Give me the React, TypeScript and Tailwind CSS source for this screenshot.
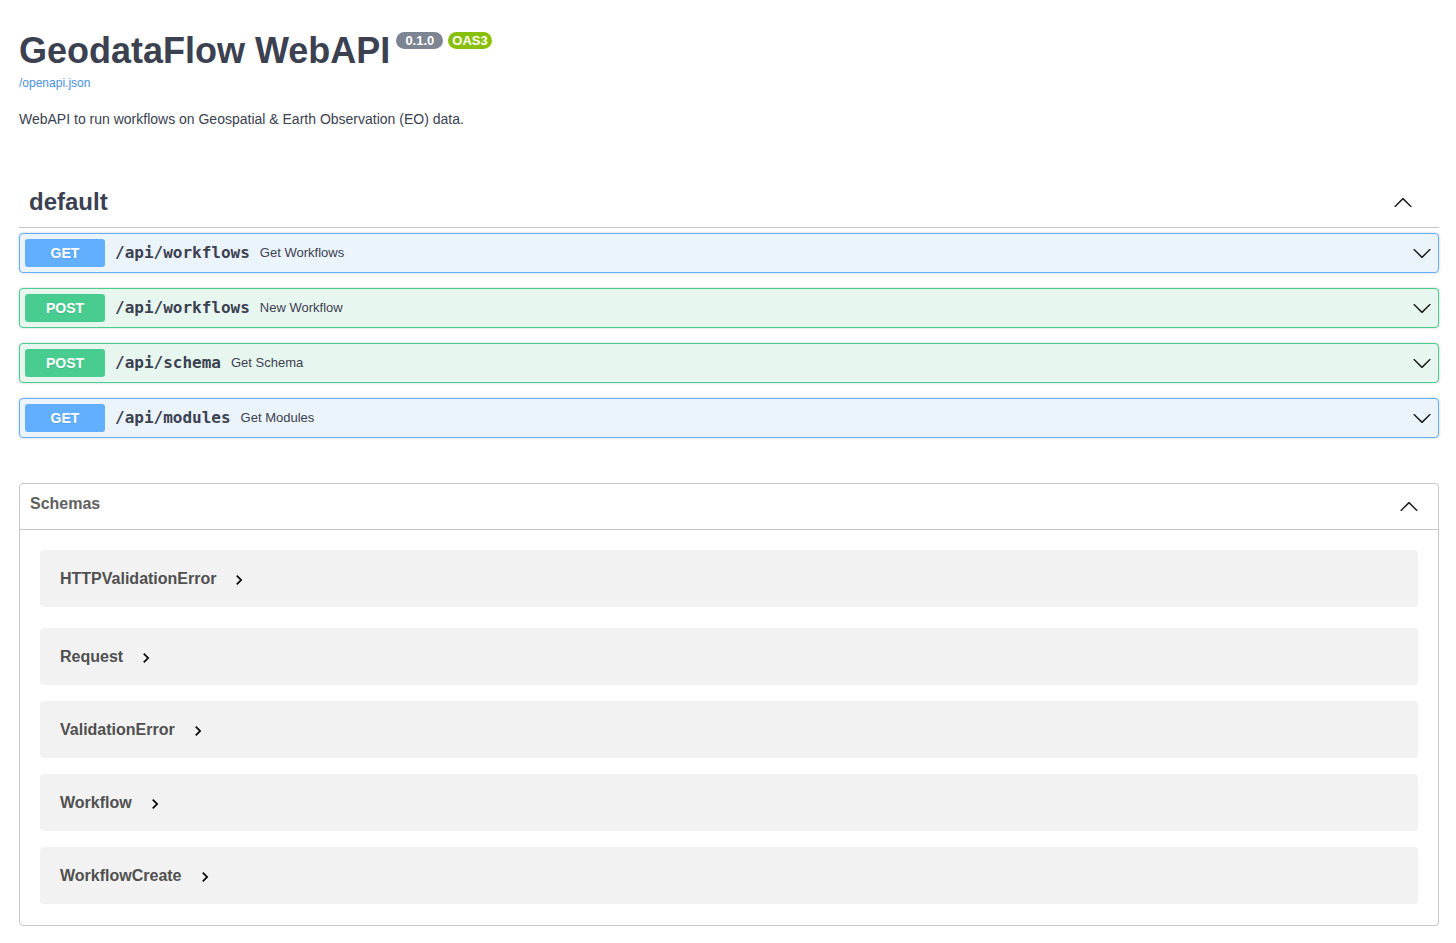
import React from 'react';

const sans = "font-['Liberation_Sans',Arial,sans-serif]";
const mono = "font-['DejaVu_Sans_Mono',monospace]";

const operations = [
  { method: 'GET', path: '/api/workflows', summary: 'Get Workflows' },
  { method: 'POST', path: '/api/workflows', summary: 'New Workflow' },
  { method: 'POST', path: '/api/schema', summary: 'Get Schema' },
  { method: 'GET', path: '/api/modules', summary: 'Get Modules' },
];

const schemas = ['HTTPValidationError', 'Request', 'ValidationError', 'Workflow', 'WorkflowCreate'];

function ArrowUp({ className }: { className?: string }) {
  return (
    <svg viewBox="0 0 20 20" width="20" height="20" className={className} fill="#1b1b1b">
      <path d="M17.418 14.908c.272.268.709.268.979 0 .27-.268.271-.701 0-.969l-7.908-7.83c-.27-.268-.707-.268-.979 0l-7.908 7.83c-.27.268-.27.701 0 .969.271.268.709.268.979 0L10 7.771l7.418 7.137z" />
    </svg>
  );
}

function ArrowDown({ className }: { className?: string }) {
  return (
    <svg viewBox="0 0 20 20" width="20" height="20" className={className} fill="#1b1b1b">
      <path d="M17.418 6.109c.272-.268.709-.268.979 0s.271.701 0 .969l-7.908 7.83c-.27.268-.707.268-.979 0l-7.908-7.83c-.27-.268-.27-.701 0-.969.271-.268.709-.268.979 0L10 13.25l7.418-7.141z" />
    </svg>
  );
}

function Chevron() {
  return (
    <svg viewBox="0 0 24 24" width="20" height="20" className="ml-[13px] mt-[3px]" fill="#000">
      <path d="M10 6L8.59 7.41 13.17 12l-4.58 4.59L10 18l6-6z" />
    </svg>
  );
}

function Operation({ method, path, summary }: { method: string; path: string; summary: string }) {
  const isGet = method === 'GET';
  return (
    <div
      className={
        isGet
          ? 'mb-[15px] flex h-[40px] items-center rounded-[4px] border border-[#61affe] bg-[#ebf3fb] p-[5px] shadow-[0_0_3px_rgba(0,0,0,0.19)]'
          : 'mb-[15px] flex h-[40px] items-center rounded-[4px] border border-[#49cc90] bg-[#e8f6f0] p-[5px] shadow-[0_0_3px_rgba(0,0,0,0.19)]'
      }
    >
      <span
        className={
          (isGet ? 'bg-[#61affe]' : 'bg-[#49cc90]') +
          ' flex h-[28px] w-[80px] items-center justify-center rounded-[3px] text-[14px] font-bold leading-[16px] text-white [text-shadow:0_1px_0_rgba(0,0,0,0.1)]'
        }
      >
        {method}
      </span>
      <span className={`${mono} px-[10px] text-[16px] font-bold leading-[20px] text-[#3b4151]`}>{path}</span>
      <span className="text-[13px] leading-[16px] text-[#3b4151]">{summary}</span>
      <ArrowDown className="ml-auto mr-[1px]" />
    </div>
  );
}

export default function App() {
  return (
    <div className={`${sans} min-h-screen bg-white pl-[19px] text-[#3b4151]`}>
      <div className="w-[1420px]">
        {/* Info */}
        <div className="pt-[30px]">
          <h2 className="flex items-start text-[36px] font-bold leading-[41px] text-[#3b4151]">
            <span>GeodataFlow WebAPI</span>
            <span className="ml-[6px] mt-[2px] rounded-full bg-[#7d8492] px-[9px] text-[13px] font-bold leading-[17px] text-white">
              0.1.0
            </span>
            <span className="ml-[5px] mt-[2px] rounded-full bg-[#89bf04] px-[4px] text-[13px] font-bold leading-[17px] text-white">
              OAS3
            </span>
          </h2>
          <a className="mt-[5px] block text-[12px] leading-[14px] text-[#4990e2]">/openapi.json</a>
          <p className="mt-[19px] text-[14px] leading-[21px] text-[#3b4151]">
            WebAPI to run workflows on Geospatial &amp; Earth Observation (EO) data.
          </p>
        </div>

        {/* default tag */}
        <div className="mt-[47px]">
          <div className="flex items-center border-b border-[#c4c6cb] pb-[10px] pl-[10px] pr-[26px] pt-[10px]">
            <h3 className="text-[24px] font-bold leading-[30px] text-[#3b4151]">default</h3>
            <ArrowUp className="ml-auto" />
          </div>
          <div className="pt-[5px]">
            {operations.map((op, i) => (
              <Operation key={i} {...op} />
            ))}
          </div>
        </div>

        {/* Schemas */}
        <section className="mt-[45px] rounded-[4px] border border-[#c4c6cb]">
          <div className="flex h-[46px] items-center border-b border-[#c4c6cb] pb-[5px] pl-[10px] pr-[19px]">
            <h4 className="text-[16px] font-bold leading-[24px] text-[#606060]">Schemas</h4>
            <ArrowUp className="ml-auto mt-[4px]" />
          </div>
          <div className="px-[20px] pb-[21px] pt-[20px]">
            {schemas.map((name, i) => (
              <div
                key={name}
                className={
                  (i === 0 ? 'mb-[21px]' : i === schemas.length - 1 ? '' : 'mb-[16px]') +
                  ' flex h-[57px] items-center rounded-[4px] bg-[#f2f2f2] px-[20px]'
                }
              >
                <span className="text-[16px] font-bold leading-[20px] text-[#505050]">{name}</span>
                <Chevron />
              </div>
            ))}
          </div>
        </section>
      </div>
    </div>
  );
}
